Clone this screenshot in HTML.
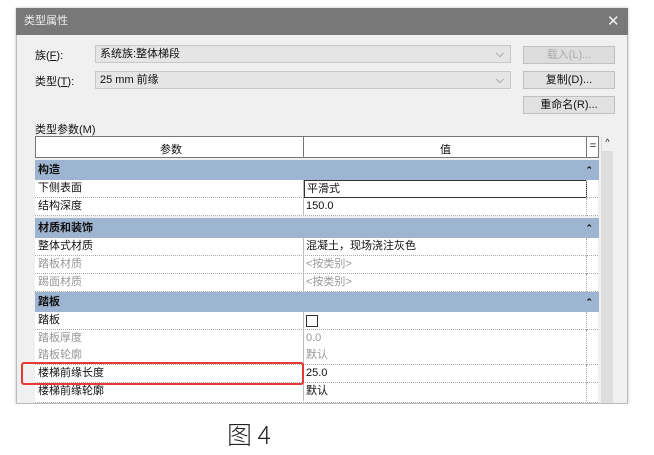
<!DOCTYPE html>
<html><head><meta charset="utf-8"><style>
*{margin:0;padding:0;box-sizing:border-box}
body{width:654px;height:455px;background:#fff;position:relative;overflow:hidden;font-family:"Liberation Sans","Noto Sans CJK SC",sans-serif;font-size:11px;color:#111}
.a{position:absolute}
.dlg{left:16px;top:8px;width:612px;height:396px;background:#f0f0f0;border:1px solid #bbb;box-shadow:0 0 3px rgba(0,0,0,.25)}
.title{left:16px;top:8px;width:612px;height:27px;background:#787878;color:#eee;font-size:11px;line-height:27px;padding-left:8px}
.combo{background:#e5e5e5;border:1px solid #c8c8c8;height:18px;line-height:16px;padding-left:4px}
.btn{background:#e1e1e1;border:1px solid #c0c0c0;height:18px;line-height:16px;text-align:center}
.row{left:35px;width:563px;height:18px;line-height:17px;background:#fff;border-bottom:1px dotted #aaa}
.row span{position:absolute;top:0}
.row .k{left:3px}.row .v{left:271px}
.row .d{left:268px;top:0;height:18px;border-left:1px solid #bbb}
.row .e{left:551px;top:0;height:18px;border-left:1px dotted #aaa}
.g{color:#999}
.sec{left:35px;width:564px;height:20px;line-height:20px;background:#9db5d0;font-weight:bold;padding-left:3px}
.sec i{position:absolute;right:6px;font-style:normal;font-size:9px}
</style></head><body>
<div class="a dlg"></div>
<div class="a title">类型属性</div>
<div class="a" style="left:607px;top:12px;color:#eee;font-size:15px">✕</div>
<div class="a" style="left:35px;top:47px">族(<u>F</u>):</div>
<div class="a" style="left:35px;top:73px">类型(<u>T</u>):</div>
<div class="a combo" style="left:95px;top:45px;width:416px">系统族:整体梯段<span style="position:absolute;right:6px;color:#666">⌵</span></div>
<div class="a combo" style="left:95px;top:71px;width:416px">25 mm 前缘<span style="position:absolute;right:6px;color:#666">⌵</span></div>
<div class="a btn" style="left:523px;top:46px;width:92px;color:#aaa;background:#ddd">载入(L)...</div>
<div class="a btn" style="left:523px;top:71px;width:92px">复制(D)...</div>
<div class="a btn" style="left:523px;top:96px;width:92px">重命名(R)...</div>
<div class="a" style="left:35px;top:121px">类型参数(M)</div>
<div class="a" style="left:35px;top:136px;width:564px;height:22px;background:#fff;border:1px solid #777"></div>
<div class="a" style="left:303px;top:136px;height:22px;border-left:1px solid #777"></div>
<div class="a" style="left:586px;top:136px;height:22px;border-left:1px solid #777;width:13px;text-align:center;line-height:20px">=</div>
<div class="a" style="left:160px;top:141px">参数</div>
<div class="a" style="left:440px;top:141px">值</div>
<div class="a" style="left:601px;top:137px;width:12px;height:266px;background:#ddd"></div>
<div class="a" style="left:602px;top:137px;width:11px;height:14px;background:#f0f0f0;font-size:9px;text-align:center">^</div>

<div class="a sec" style="top:160px">构造<i>⌃</i></div>
<div class="a row" style="top:180px"><span class="k">下侧表面</span><span class="d"></span><span class="v" style="left:269px;width:283px;border:1px solid #333;height:18px;padding-left:2px">平滑式</span><span class="e"></span></div>
<div class="a row" style="top:198px"><span class="k">结构深度</span><span class="d"></span><span class="v">150.0</span><span class="e"></span></div>
<div class="a sec" style="top:218px">材质和装饰<i>⌃</i></div>
<div class="a row" style="top:238px"><span class="k">整体式材质</span><span class="d"></span><span class="v">混凝土，现场浇注灰色</span><span class="e"></span></div>
<div class="a row g" style="top:256px"><span class="k">踏板材质</span><span class="d"></span><span class="v">&lt;按类别&gt;</span><span class="e"></span></div>
<div class="a row g" style="top:274px"><span class="k">踢面材质</span><span class="d"></span><span class="v">&lt;按类别&gt;</span><span class="e"></span></div>
<div class="a sec" style="top:292px">踏板<i>⌃</i></div>
<div class="a row" style="top:312px"><span class="k">踏板</span><span class="d"></span><span class="v" style="top:3px;width:12px;height:12px;border:1px solid #333"></span><span class="e"></span></div>
<div class="a row g" style="top:330px"><span class="k">踏板厚度</span><span class="d"></span><span class="v">0.0</span><span class="e"></span></div>
<div class="a row g" style="top:347px"><span class="k">踏板轮廓</span><span class="d"></span><span class="v">默认</span><span class="e"></span></div>
<div class="a row" style="top:365px"><span class="k">楼梯前缘长度</span><span class="d"></span><span class="v">25.0</span><span class="e"></span></div>
<div class="a row" style="top:383px;height:20px;overflow:hidden"><span class="k">楼梯前缘轮廓</span><span class="d"></span><span class="v">默认</span><span class="e"></span></div>
<div class="a" style="left:21px;top:362px;width:283px;height:23px;border:2px solid #e53935;border-radius:3px"></div>
<div class="a" style="left:0;top:404px;width:654px;height:51px;background:#fff"></div>
<div class="a" style="left:227px;top:416px;font-size:25px;font-weight:300;color:#222;font-family:'Noto Sans CJK SC','Liberation Sans',sans-serif">图 4</div>
</body></html>
